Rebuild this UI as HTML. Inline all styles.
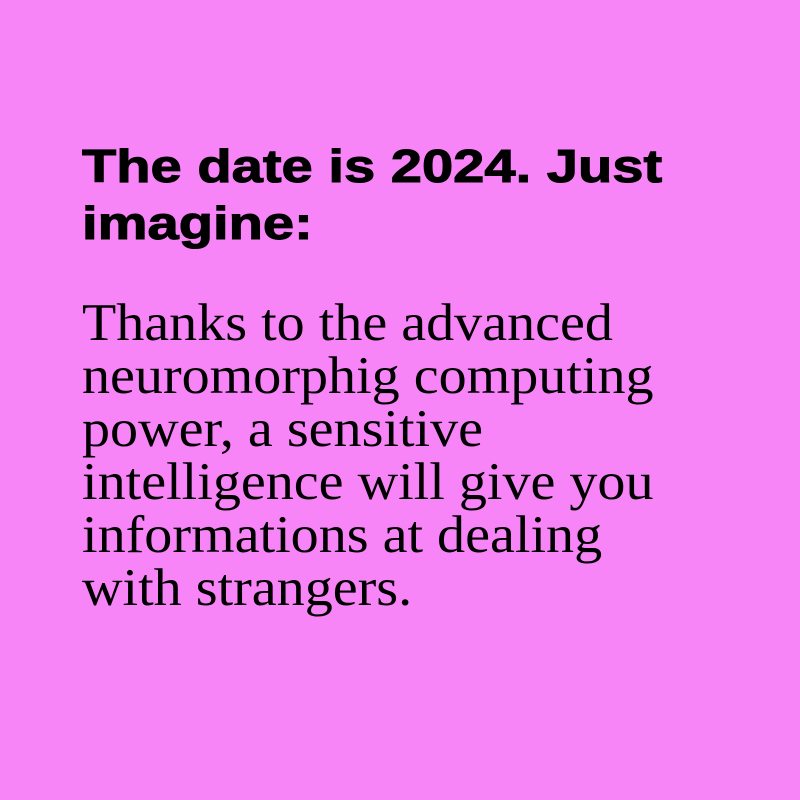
<!DOCTYPE html>
<html><head><meta charset="utf-8"><style>
html,body{margin:0;padding:0;}
body{width:800px;height:800px;background:#f785f7;position:relative;overflow:hidden;}
h1{position:absolute;left:82px;top:138px;margin:0;font-family:"Liberation Sans",sans-serif;font-weight:bold;font-size:46px;line-height:57px;color:#000;width:700px;white-space:nowrap;transform:scaleX(1.22);transform-origin:0 0;-webkit-text-stroke:1px #000;}
p{position:absolute;left:82px;top:297px;margin:0;font-family:"Liberation Serif",serif;font-size:53px;line-height:53px;color:#000;width:700px;white-space:nowrap;transform:scaleX(1.058);transform-origin:0 0;}
</style></head><body>
<h1>The date is 2024. Just<br>imagine:</h1>
<p>Thanks to the advanced<br>neuromorphig computing<br>power, a sensitive<br>intelligence will give you<br>informations at dealing<br>with strangers.</p>
</body></html>
